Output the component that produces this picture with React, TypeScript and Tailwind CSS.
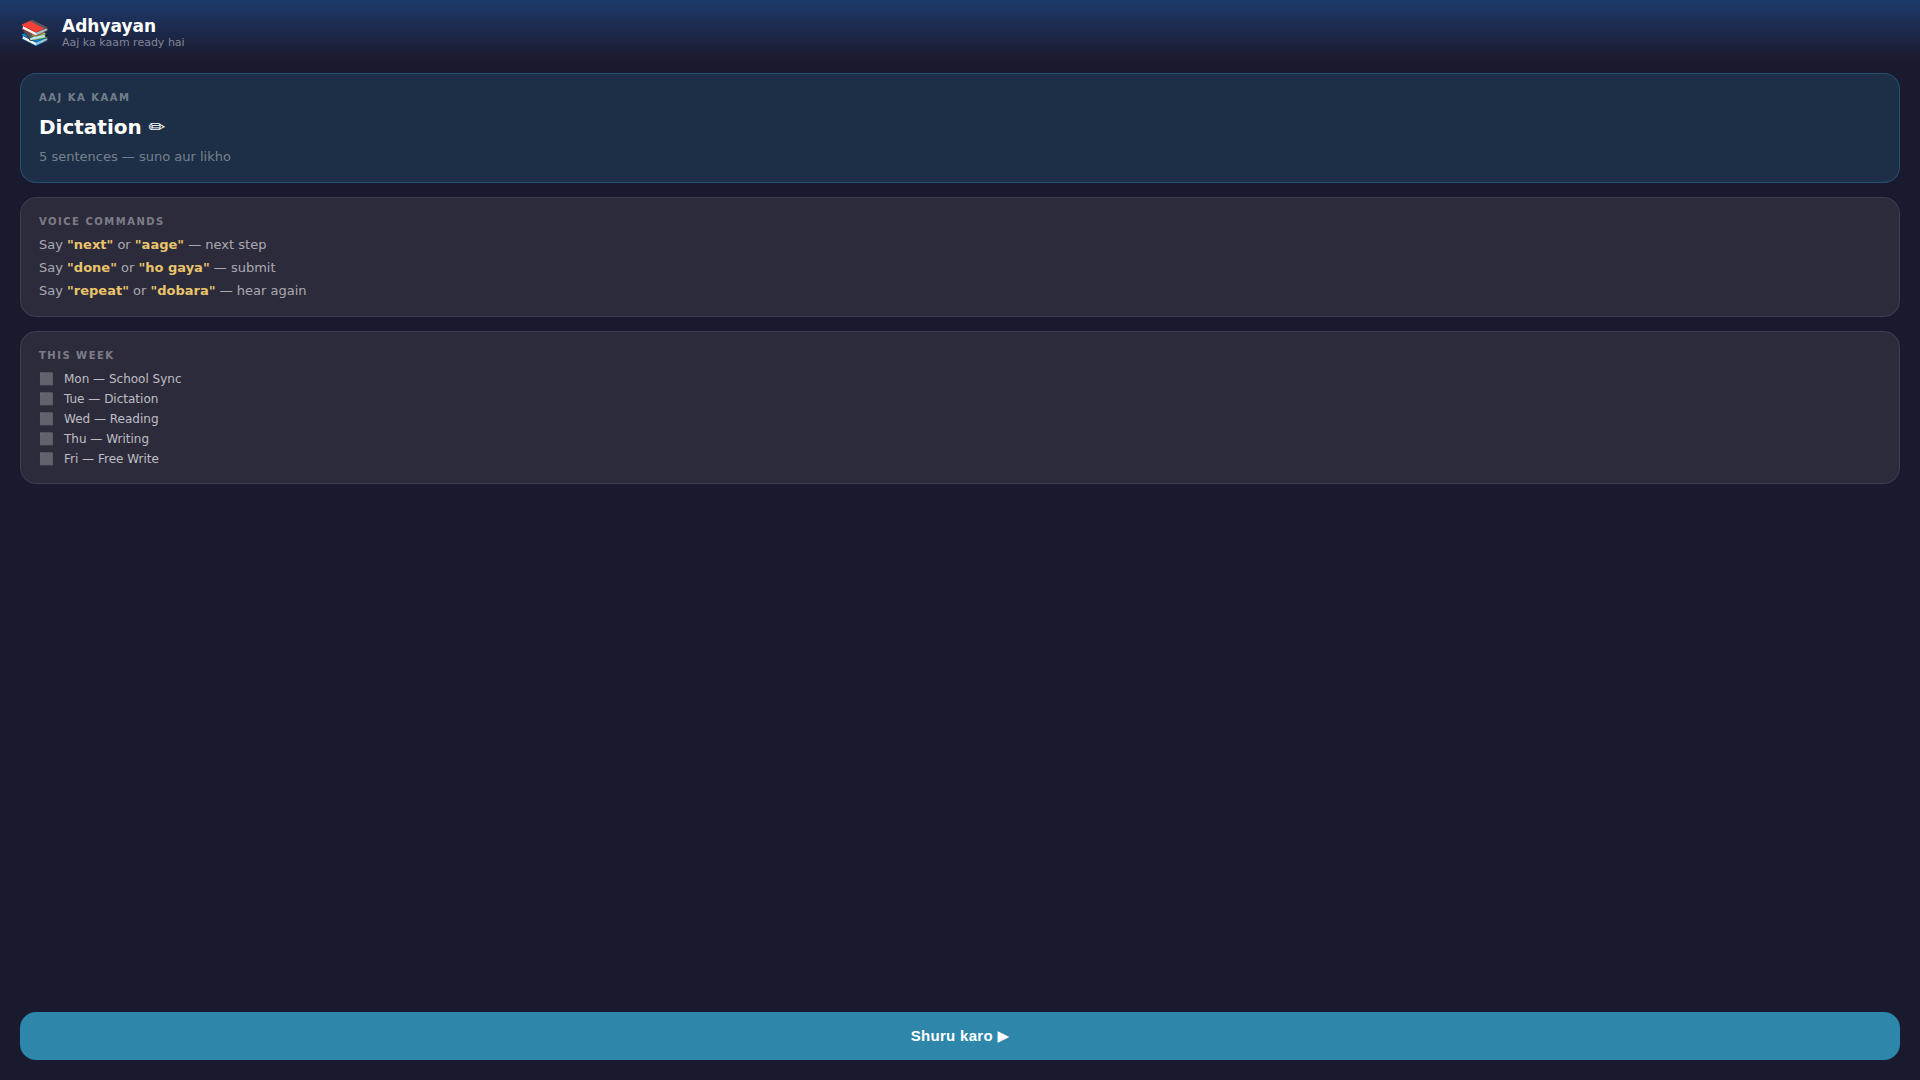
import React from "react";

const cardClass = "rounded-2xl border px-[18px] py-3.5";
const plainCardClass = "border-[#403e4e] bg-[#2c2b3c]";
const labelClass = "text-[10px] leading-5 font-bold tracking-[1.5px] uppercase text-white/40";

const commands = [
  { first: '"next"', second: '"aage"', result: "next step" },
  { first: '"done"', second: '"ho gaya"', result: "submit" },
  { first: '"repeat"', second: '"dobara"', result: "hear again" },
];

const week = ["Mon — School Sync", "Tue — Dictation", "Wed — Reading", "Thu — Writing", "Fri — Free Write"];

export default function App() {
  return (
    <div className="flex min-h-screen flex-col bg-[#1a1a2e] font-['DejaVu_Sans',sans-serif] text-white">
      <header className="flex items-center gap-3 bg-linear-to-b from-[#1b3a6b] to-[#1a1a2e] px-5 pt-4 pb-3">
        <span className="text-2xl leading-[normal]">📚</span>
        <div>
          <h1 className="text-[17px] leading-5 font-bold">Adhyayan</h1>
          <p className="text-[11px] leading-[13px] text-white/45">Aaj ka kaam ready hai</p>
        </div>
      </header>
      <main className="flex flex-1 flex-col gap-3.5 px-5 py-3">
        <section className={`${cardClass} border-[#2e86ab]/40 bg-[#2e86ab]/20`}>
          <h2 className={labelClass}>Aaj ka kaam</h2>
          <p className="mt-1.5 text-xl leading-[26px] font-bold">Dictation ✏</p>
          <p className="mt-1.5 text-[13px] leading-[22px] text-white/40">5 sentences — suno aur likho</p>
        </section>
        <section className={`${cardClass} ${plainCardClass}`}>
          <h2 className={labelClass}>Voice commands</h2>
          <ul className="mt-px text-[13px] leading-[23px] text-white/60">
            {commands.map((c) => (
              <li key={c.first}>
                Say <b className="text-[#e9c46a]">{c.first}</b> or <b className="text-[#e9c46a]">{c.second}</b> — {c.result}
              </li>
            ))}
          </ul>
        </section>
        <section className={`${cardClass} ${plainCardClass}`}>
          <h2 className={labelClass}>This week</h2>
          <ul className="mt-[3px] text-xs leading-5 text-white/70">
            {week.map((day) => (
              <li key={day} className="flex items-center gap-2.5">
                <span className="text-white/30">⬜</span>
                <span>{day}</span>
              </li>
            ))}
          </ul>
        </section>
      </main>
      <footer className="px-5 pt-3 pb-5">
        <button className="h-12 w-full rounded-2xl bg-[#2e86ab] font-['Liberation_Sans','DejaVu_Sans',sans-serif] text-[15px] font-bold tracking-[0.3px]">
          Shuru karo ▶
        </button>
      </footer>
    </div>
  );
}
